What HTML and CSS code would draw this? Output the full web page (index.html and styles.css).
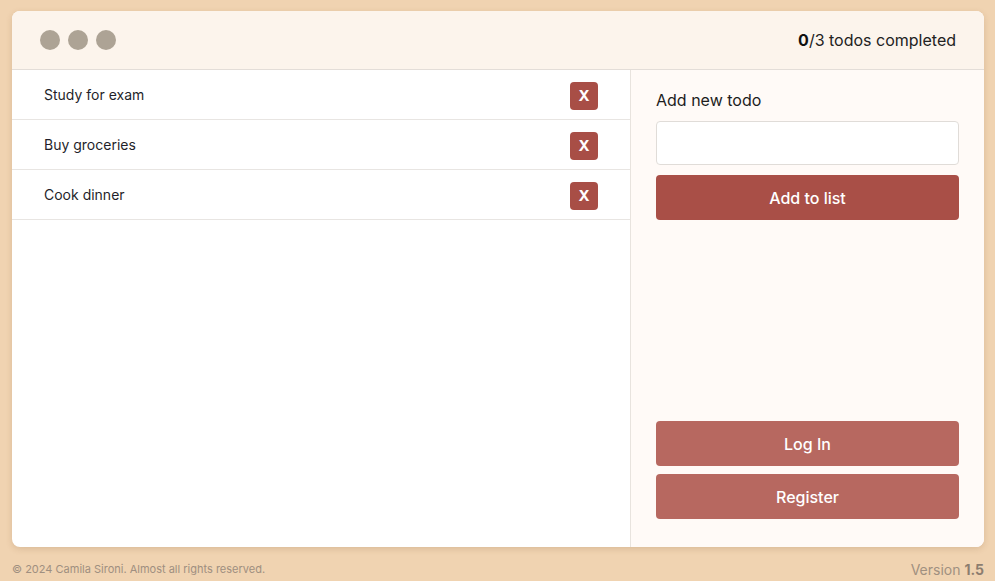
FILE: index.html
```html
<!DOCTYPE html>
<html lang="en">
<head>
<meta charset="utf-8">
<title>Todo</title>
<link rel="stylesheet" href="styles.css">
</head>
<body>
<div class="page">
  <main class="card">
    <header class="card-header">
      <div class="dots"><span class="dot"></span><span class="dot"></span><span class="dot"></span></div>
      <p class="count"><b>0</b>/3 todos completed</p>
    </header>
    <div class="card-body">
      <ul class="list">
        <li class="item"><span>Study for exam</span><button class="del">X</button></li>
        <li class="item"><span>Buy groceries</span><button class="del">X</button></li>
        <li class="item"><span>Cook dinner</span><button class="del">X</button></li>
      </ul>
      <aside class="side">
        <div class="add">
          <label class="add-label">Add new todo</label>
          <input class="add-input" type="text">
          <button class="btn btn-primary">Add to list</button>
        </div>
        <div class="auth">
          <button class="btn btn-soft">Log In</button>
          <button class="btn btn-soft">Register</button>
        </div>
      </aside>
    </div>
  </main>
  <footer class="footer">
    <small class="copy">© 2024 Camila Sironi. Almost all rights reserved.</small>
    <span class="version">Version <b>1.5</b></span>
  </footer>
</div>
</body>
</html>
```

FILE: styles.css
```css
* { box-sizing: border-box; }
html, body { margin: 0; padding: 0; }
body {
  background: #f0d3b1;
  font-family: Inter, "Noto Sans", sans-serif;
  color: #1a1a1a;
  height: 581px;
  overflow: hidden;
}
.page {
  padding: 11px 11px 0 12px;
}
.card {
  height: 536px;
  background: #fff;
  border-radius: 8px;
  box-shadow: 0 2px 6px rgba(120, 80, 40, 0.18);
  display: flex;
  flex-direction: column;
  overflow: hidden;
}
.card-header {
  height: 59px;
  flex: none;
  background: #fcf4ec;
  border-bottom: 1px solid #e3ddd8;
  display: flex;
  align-items: center;
  justify-content: space-between;
  padding: 0 28px 0 28px;
}
.dots { display: flex; gap: 8px; }
.dot {
  width: 20px; height: 20px; border-radius: 50%;
  background: #ada395;
}
.count { margin: 0; font-size: 16px; color: #222; }
.count b { font-weight: 700; color: #111; }
.card-body { flex: 1; display: flex; min-height: 0; }
.list {
  list-style: none; margin: 0; padding: 0;
  width: 619px; flex: none;
  border-right: 1px solid #e8e3de;
}
.item {
  height: 50px;
  border-bottom: 1px solid #e8e5e2;
  display: flex; align-items: center; justify-content: space-between;
  padding: 0 32px 0 32px;
  font-size: 14px;
  color: #1f1f2a;
}
.del {
  width: 28px; height: 28px;
  border: 0; border-radius: 4px;
  background: #a84e46; color: #fff;
  font-family: Inter, sans-serif;
  font-weight: 700; font-size: 15px;
  padding: 0;
  margin-top: 2px;
}
.side {
  flex: 1;
  background: #fffaf7;
  padding: 21px 25px 28px 25px;
  display: flex; flex-direction: column; justify-content: space-between;
}
.add { display: flex; flex-direction: column; }
.add-label { font-size: 16px; color: #1d1d1d; line-height: 19px; margin-bottom: 11px; }
.add-input {
  height: 44px;
  border: 1px solid #e0dcd8;
  border-radius: 4px;
  background: #fff;
  margin: 0 0 10px 0;
}
.btn {
  height: 45px;
  border: 0; border-radius: 4px;
  color: #fff;
  font-family: Inter, sans-serif;
  font-size: 16px; font-weight: 500;
  width: 100%;
}
.btn-primary { background: #a94f47; }
.auth { display: flex; flex-direction: column; gap: 8px; }
.btn-soft { background: #b76860; }
.footer {
  height: 34px;
  display: flex; align-items: center; justify-content: space-between;
  padding: 10px 0 0 0;
}
.copy { font-size: 11px; color: #9f8f80; }
.version { font-size: 14px; color: #a09080; }
.version b { color: #8c7d6f; font-weight: 700; }
```
